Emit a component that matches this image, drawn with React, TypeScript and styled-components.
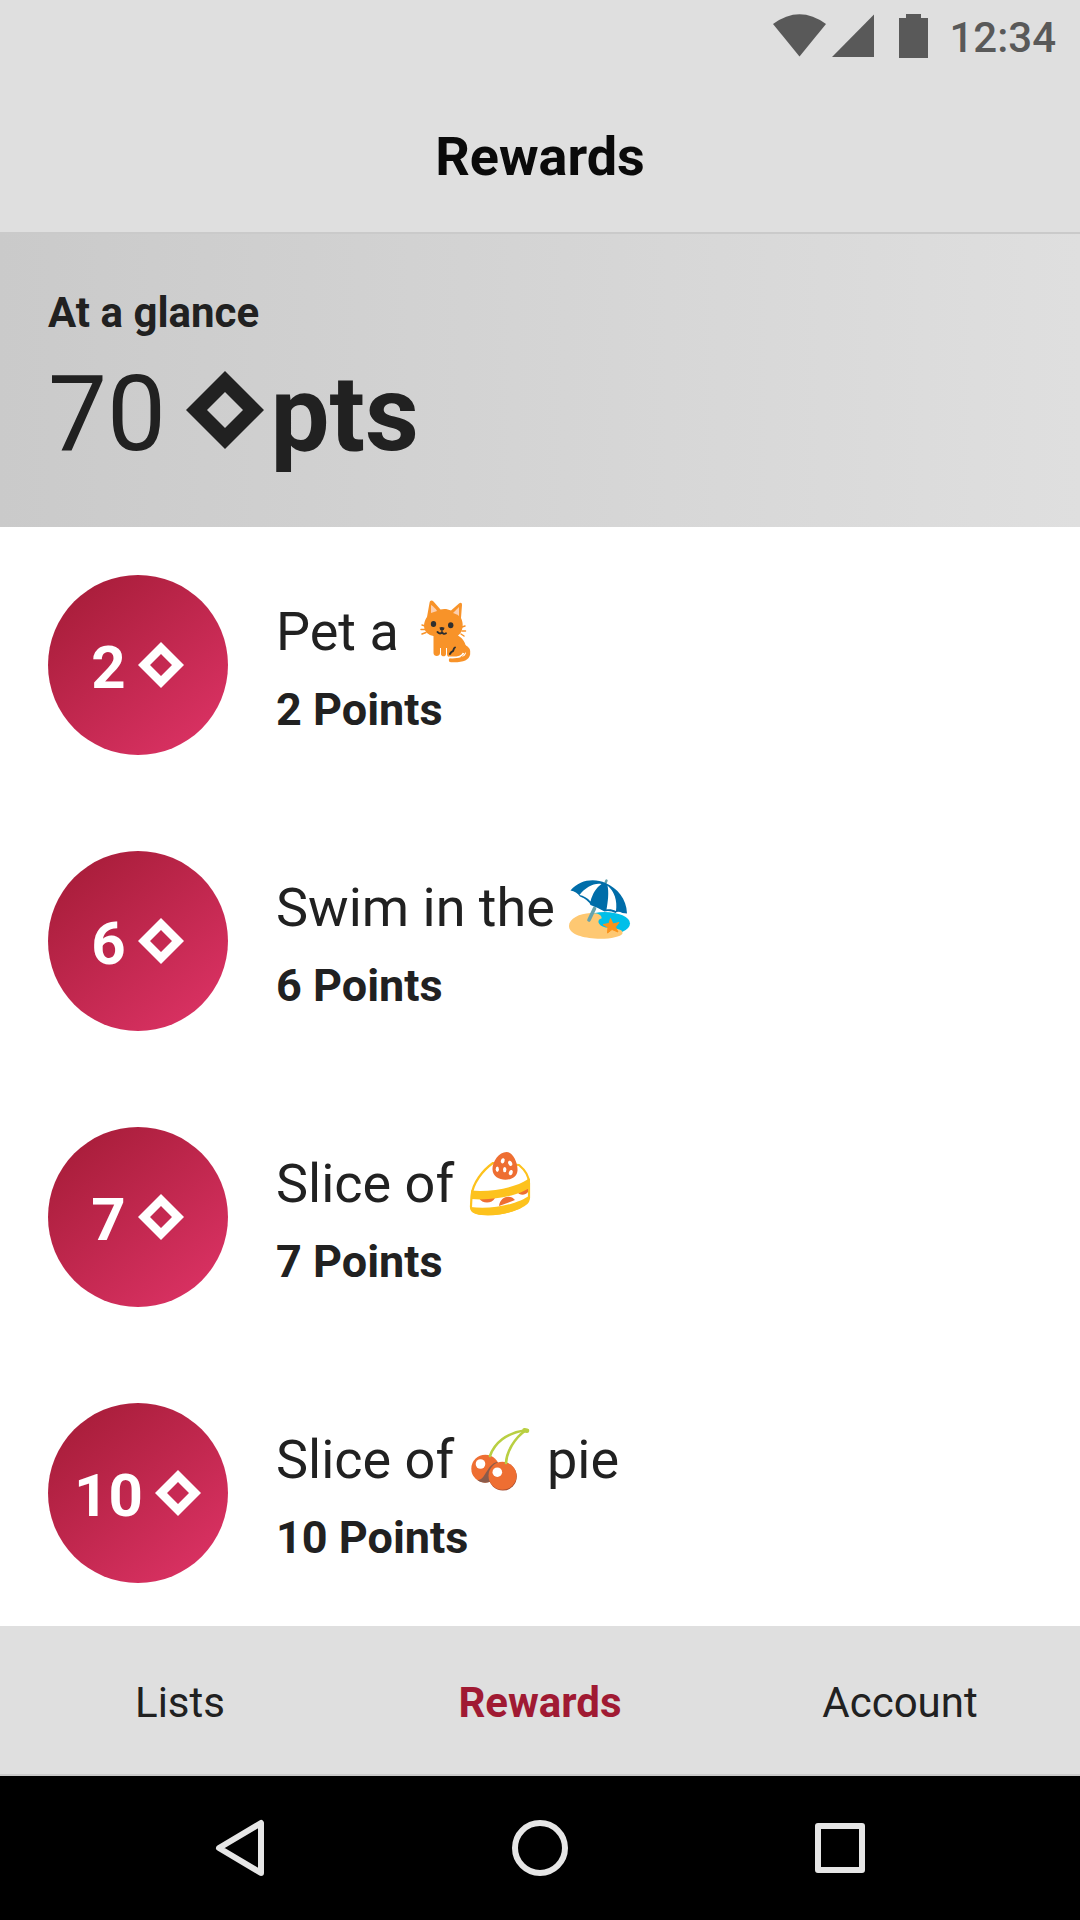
import React from "react";
import styled, { createGlobalStyle } from "styled-components";

const Global = createGlobalStyle`
  * { box-sizing: border-box; }
  body { margin: 0; background: #fff; font-family: Roboto, "Noto Sans", sans-serif; color: #212121; }
`;

const Screen = styled.div`
  display: flex;
  flex-direction: column;
  width: 1080px;
  height: 1920px;
  overflow: hidden;
  background: #fff;
`;

const Header = styled.header`
  flex: none;
  height: 234px;
  background: #dfdfdf;
  border-bottom: 2px solid #cacaca;
`;

const StatusBar = styled.div`
  display: flex;
  justify-content: flex-end;
  align-items: center;
  height: 72px;
  padding-right: 24px;
  color: #595959;
`;

const StatusIcons = styled.svg`
  display: block;
  margin-right: 17px;
`;

const Clock = styled.span`
  font-size: 42px;
  font-weight: 500;
  line-height: 72px;
  padding-top: 4px;
`;

const Title = styled.h1`
  margin: 0;
  padding-top: 51px;
  text-align: center;
  font-size: 54px;
  line-height: 68px;
  font-weight: 700;
  color: #0a0a0a;
`;

const Glance = styled.section`
  flex: none;
  height: 293px;
  padding: 54px 48px 0;
  background: linear-gradient(90deg, #cacaca, #dfdfdf);
`;

const GlanceLabel = styled.h2`
  margin: 0;
  font-size: 42px;
  line-height: 50px;
  font-weight: 700;
`;

const Balance = styled.div`
  display: flex;
  align-items: center;
  margin-top: 15px;
  font-size: 105px;
  line-height: 124px;
`;

const Unit = styled.b`
  font-weight: 700;
`;

const DiamondSvg = styled.svg<{ $left: number; $right: number; $lift: number }>`
  flex: none;
  display: block;
  margin: 0 ${(p) => p.$right}px ${(p) => p.$lift}px ${(p) => p.$left}px;
`;

const List = styled.ul`
  flex: 1;
  min-height: 0;
  margin: 0;
  padding: 0;
  list-style: none;
  overflow: hidden;
`;

const Row = styled.li`
  display: flex;
  align-items: center;
  gap: 48px;
  height: 276px;
  padding: 0 48px;
`;

const Badge = styled.div`
  flex: none;
  display: flex;
  align-items: center;
  justify-content: center;
  width: 180px;
  height: 180px;
  border-radius: 50%;
  background: linear-gradient(141deg, #a21b35, #e03468);
  color: #fff;
  font-size: 60px;
  line-height: 70px;
  font-weight: 700;
`;

const BadgeValue = styled.span`
  padding-top: 6px;
`;

const Details = styled.div`
  display: flex;
  flex-direction: column;
  gap: 17px;
  padding-top: 5px;
`;

const Name = styled.div`
  display: flex;
  align-items: center;
  height: 68px;
  font-size: 54px;
  line-height: 68px;
  white-space: pre;
`;

const Cost = styled.div`
  font-size: 45px;
  line-height: 54px;
  font-weight: 700;
`;

const EmojiSvg = styled.svg`
  flex: none;
  display: block;
  width: 66px;
  height: 68px;
  overflow: visible;
`;

const TabBar = styled.nav`
  flex: none;
  display: grid;
  grid-template-columns: repeat(3, 1fr);
  height: 150px;
  padding-top: 2px;
  background: #dfdfdf;
  border-bottom: 2px solid #cacaca;
`;

const Tab = styled.a<{ $active?: boolean }>`
  text-align: center;
  font-size: 42px;
  line-height: 150px;
  font-weight: ${(p) => (p.$active ? 700 : 400)};
  color: ${(p) => (p.$active ? "#a01a33" : "#212121")};
`;

const SystemBar = styled.footer`
  flex: none;
  display: flex;
  justify-content: center;
  align-items: center;
  gap: 228px;
  height: 144px;
  background: #000;
`;

const NavIcon = styled.svg`
  display: block;
  width: 72px;
  height: 72px;
  fill: none;
  stroke: #e6e6e6;
  stroke-width: 6;
  stroke-linejoin: round;
`;

interface DiamondProps {
  half: number;
  inner: number;
  left?: number;
  right?: number;
  lift?: number;
}

function Diamond({ half, inner, left = 0, right = 0, lift = 0 }: DiamondProps) {
  const s = half * 2;
  return (
    <DiamondSvg $left={left} $right={right} $lift={lift} width={s} height={s} viewBox={`${-half} ${-half} ${s} ${s}`}>
      <path
        fill="currentColor"
        fillRule="evenodd"
        d={`M0 ${-half}L${half} 0L0 ${half}L${-half} 0ZM0 ${-inner}L${-inner} 0L0 ${inner}L${inner} 0Z`}
      />
    </DiamondSvg>
  );
}

function Cat() {
  return (
    <EmojiSvg viewBox="0 -2 66 68" role="img" aria-label="cat">
      <g fill="none" stroke="#f89329" strokeLinecap="round">
        <path strokeWidth="4.4" d="M42 49C50 43 57 48 56 54C55 59 49 60.500 39 60" />
        <path strokeWidth="1.500" d="M10 25L13 26M9 29.500H13M10 34L14 32.500M50 27L53 26M50 31H53.500M49 34L52 36" />
      </g>
      <path fill="#f89329" d="M15 17L17.500 3C18 0 20 0 21.500 1.500L28.500 9.500C32 8.500 36 9 39 10.500L47 3.500C49 2 50 3 50 5L49 18C52 24 51 32 46 35.500C52 39 55 45 54 52L50 57H38C36 57 35 56 35 54V48H34V54C34 57 29.500 57 29 54.500V48H28V53C28 57 21.500 57 21.500 53V36C11 34 10 24 15 17Z" />
      <path fill="#fccfb0" d="M19 13V5C21 6 24 9 25 11ZM41 13L47 7V16C45 14 43 14 41 13Z" />
      <g fill="#2f2f2f">
        <ellipse cx="21.500" cy="24" rx="2.700" ry="3" />
        <ellipse cx="38.700" cy="25.300" rx="2.700" ry="3" />
        <path d="M27.500 27.500Q30 26.500 32.500 27.800Q32.500 30 30 31Q27.500 30 27.500 27.500Z" />
      </g>
      <g fill="none" stroke="#2f2f2f" strokeWidth="1.900" strokeLinecap="round" strokeLinejoin="round">
        <path d="M25.500 32Q28.500 35 30 32Q31.500 35 34 33.300" />
        <path d="M43 47.500C41 48.500 42 50.500 40.500 51.500C39 51.500 39 52.500 38 54" />
      </g>
      <path fill="none" stroke="#fff" strokeWidth="1.800" d="M37 57.400C43 57.800 50 57 51.500 53" />
    </EmojiSvg>
  );
}

function Beach() {
  return (
    <EmojiSvg viewBox="2.500 -1.500 66 68" role="img" aria-label="beach with umbrella">
      <ellipse cx="39" cy="48" rx="25.500" ry="11.500" fill="#00bfe9" />
      <path fill="#fec872" d="M3.500 50.500C3.500 43 14 38 25 37.500C34 37 37 41 36 43C31 44 32 50 40 52C49 53 58 53 57 58C55 62 41 64 29 63C15 62 3.500 58 3.500 50.500Z" />
      <path fill="none" stroke="#65a3ad" strokeWidth="3.600" strokeLinecap="round" d="M23.500 44.500L29 33" />
      <path fill="none" stroke="#65a3ad" strokeWidth="2.400" strokeLinecap="round" d="M39 10L41 5" />
      <path fill="#006da9" d="M5 15C14 4 29 2.500 40 7.500C52 13 61 23 61.500 38L57 37.500Q52 35 50 37.500Q44 34.500 39 36Q32 32 25 29.500Q23 24.500 14.500 21Q11 16 5 15Z" />
      <path fill="#fff" d="M14 19.500C20 11.500 29 7 36 8.500C31 12 27 18 25 26C22 22.500 18 20 14 19.500ZM42 10C49 16 52 25 50.500 35.500C47.500 34 44 33.500 41 34C42.500 26 43.500 17 42 10Z" />
      <path fill="#fb9219" stroke="#fb9219" strokeWidth="1" strokeLinejoin="round" d="M45 43L47.500 48.500L53.500 47L50 51.500L52.500 56.500L46.500 54L42 57.500L42.500 52L37.500 49L43.500 48Z" />
    </EmojiSvg>
  );
}

function Cake() {
  return (
    <EmojiSvg viewBox="2 0 66 68" role="img" aria-label="slice of cake">
      <path fill="#fff" stroke="#fdc21d" strokeWidth="2.200" strokeLinejoin="round" d="M5.500 46C6.500 33 17 20 27 13L53 15C59 20 63 26 63 33V48C59 57 42 64 23 64C10 64 4.500 62 5 56Z" />
      <path fill="#ee6e32" d="M13 48H29C26 54 16 54 13 48ZM33 56C34 46 45 44 49 50ZM51 42L62 38.500V42C59 46 53 45 51 42Z" />
      <path fill="#fdc21d" d="M5 40.500C25 42.500 50 37.500 61.500 29.500L64 28.500V37.500C53 45.500 28 51 5 49Z" />
      <path fill="#fdc21d" d="M4.500 57C26 60 53 54 64 45C64 50 63.500 53 60 55C50 63 24 68 10 64C5 62 4.500 60 4.500 57Z" />
      <path fill="#ee6e32" d="M40.500 2C33 2 26 12 26.500 19.500C27 33 51 33 51.500 20.500C52 13 47 2 40.500 2Z" />
      <g fill="#fff">
        <ellipse cx="36.700" cy="10.800" rx="1.900" ry="2.700" transform="rotate(20 36.700 10.800)" />
        <ellipse cx="44.200" cy="13.300" rx="1.900" ry="2.700" transform="rotate(-25 44.200 13.300)" />
        <ellipse cx="31.300" cy="19.300" rx="1.600" ry="2.700" />
        <ellipse cx="38.700" cy="19.600" rx="1.700" ry="2.700" />
        <ellipse cx="44.800" cy="22.600" rx="1.900" ry="2.700" transform="rotate(20 44.800 22.600)" />
      </g>
    </EmojiSvg>
  );
}

function Cherries() {
  return (
    <EmojiSvg viewBox="2.500 -2 66 68" role="img" aria-label="cherries">
      <circle cx="19.800" cy="40.700" r="14" fill="#ee6e32" />
      <path fill="#8b5b4b" d="M12 52C20 53 21 36 32 34L34 44L24 54C19 55.500 15 54.500 12 52Z" />
      <circle cx="37.300" cy="48.600" r="14" fill="#a14b31" />
      <circle cx="37" cy="47.800" r="14" fill="#ee6e32" />
      <circle cx="15" cy="36" r="4.800" fill="#fff" />
      <circle cx="31.800" cy="44.200" r="4.800" fill="#fff" />
      <g fill="none" stroke="#b9cf42" strokeWidth="2.600" strokeLinecap="round">
        <path d="M24.500 28C29 15 41 5 59 2.500" />
        <path d="M40.500 35C41 24 49 10 60 2.500" />
        <path strokeWidth="4.600" d="M59 2.300L61.500 2.700" />
      </g>
    </EmojiSvg>
  );
}

const rewards = [
  { points: 2, before: "Pet a ", Emoji: Cat, after: "" },
  { points: 6, before: "Swim in the ", Emoji: Beach, after: "" },
  { points: 7, before: "Slice of ", Emoji: Cake, after: "" },
  { points: 10, before: "Slice of ", Emoji: Cherries, after: " pie" },
];

export default function App() {
  return (
    <Screen>
      <Global />
      <Header>
        <StatusBar>
          <StatusIcons width="160" height="72" viewBox="772 0 160 72" fill="currentColor">
            <path d="M773 24Q799.500 4.500 826 24L799.500 56.500Z" />
            <path d="M832 57L874 14.500V57Z" />
            <path d="M899 18H906V14H921V18H928V58H899Z" />
          </StatusIcons>
          <Clock>12:34</Clock>
        </StatusBar>
        <Title>Rewards</Title>
      </Header>
      <Glance>
        <GlanceLabel>At a glance</GlanceLabel>
        <Balance>
          <span>70</span>
          <Diamond half={39} inner={18} left={19.5} right={7} lift={11} />
          <Unit>pts</Unit>
        </Balance>
      </Glance>
      <List>
        {rewards.map(({ points, before, Emoji, after }) => (
          <Row key={points}>
            <Badge>
              <BadgeValue>{points}</BadgeValue>
              <Diamond half={23} inner={11} left={12} right={1} />
            </Badge>
            <Details>
              <Name>
                <span>{before}</span>
                <Emoji />
                <span>{after}</span>
              </Name>
              <Cost>{points} Points</Cost>
            </Details>
          </Row>
        ))}
      </List>
      <TabBar>
        <Tab>Lists</Tab>
        <Tab $active>Rewards</Tab>
        <Tab>Account</Tab>
      </TabBar>
      <SystemBar>
        <NavIcon viewBox="204 1812 72 72">
          <path d="M261 1823V1873L219 1848Z" />
        </NavIcon>
        <NavIcon viewBox="504 1812 72 72">
          <circle cx="540" cy="1848" r="25" />
        </NavIcon>
        <NavIcon viewBox="804 1812 72 72">
          <rect x="818" y="1826" width="44" height="44" />
        </NavIcon>
      </SystemBar>
    </Screen>
  );
}
